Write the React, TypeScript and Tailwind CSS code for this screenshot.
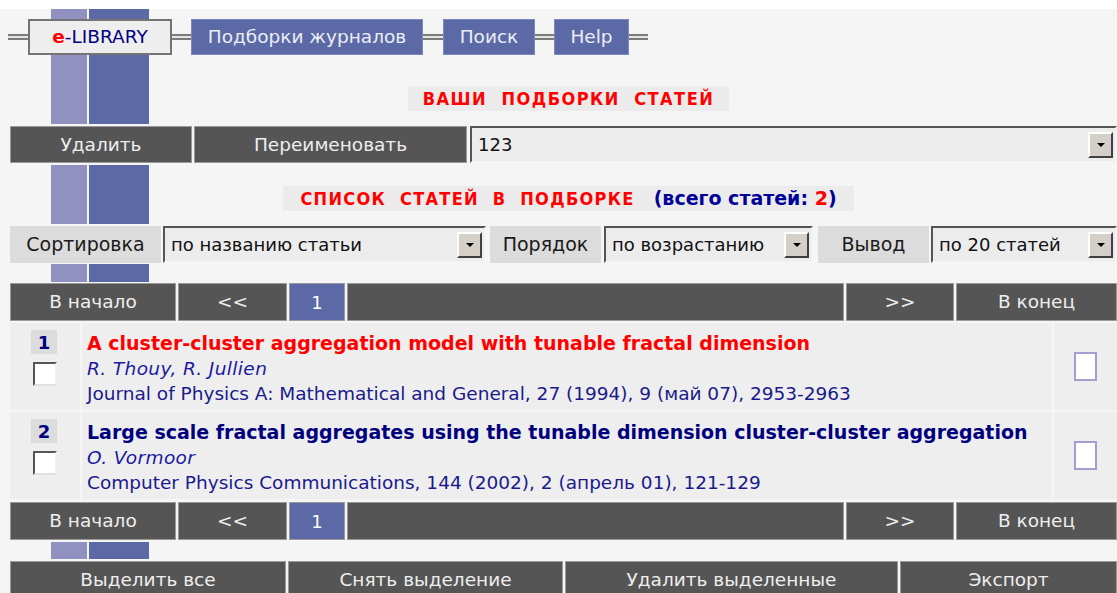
import type { ReactNode } from "react";

// two vertical stripes that run down the left side between table blocks
const stripes =
  "bg-[linear-gradient(to_right,transparent_51px,#9191c1_51px,#9191c1_87px,transparent_87px,transparent_89px,#5b6aa5_89px,#5b6aa5_149px,transparent_149px)]";

const font = "font-['DejaVu_Sans',sans-serif]";
const narrow = "font-['DejaVu_Sans_Condensed','DejaVu_Sans',sans-serif]";

type Article = {
  n: number;
  title: string;
  authors: string;
  source: string;
  hot?: boolean;
};

const articles: Article[] = [
  {
    n: 1,
    title: "A cluster-cluster aggregation model with tunable fractal dimension",
    authors: "R. Thouy, R. Jullien",
    source: "Journal of Physics A: Mathematical and General, 27 (1994), 9 (май 07), 2953-2963",
    hot: true,
  },
  {
    n: 2,
    title: "Large scale fractal aggregates using the tunable dimension cluster-cluster aggregation",
    authors: "O. Vormoor",
    source: "Computer Physics Communications, 144 (2002), 2 (апрель 01), 121-129",
  },
];

function Link() {
  return <div className="h-[6px] border-y-2 border-[#7a7a7a] bg-[#e4e4e4]" />;
}

function NavItem({ children, className = "" }: { children: ReactNode; className?: string }) {
  return (
    <div
      className={`flex h-full items-center justify-center border border-[#7d88bb] bg-[#5b6aa6] text-[18.5px] text-[#eceef6] ${className}`}
    >
      {children}
    </div>
  );
}

function Cell({ children, className = "" }: { children?: ReactNode; className?: string }) {
  return (
    <div
      className={`flex h-full items-center justify-center border border-[#9a9a9a] bg-[#555555] text-[18.5px] text-[#eeeeee] ${className}`}
    >
      {children}
    </div>
  );
}

function Label({ children, className = "" }: { children: ReactNode; className?: string }) {
  return (
    <div className={`flex h-full items-center justify-center bg-[#dcdcdc] text-[19px] text-[#1a1a1a] ${className}`}>
      {children}
    </div>
  );
}

function Select({ value, className = "" }: { value: string; className?: string }) {
  return (
    <div
      className={`flex h-full items-center border-2 border-t-[#555] border-l-[#555] border-r-[#f4f4f4] border-b-[#f4f4f4] bg-[#ececec] pl-[6px] pr-[2px] text-[18px] text-[#111] ${className}`}
    >
      <span className="flex-1 truncate">{value}</span>
      <span className="flex h-[26px] w-[25px] items-center justify-center border-2 border-t-white border-l-white border-r-[#404040] border-b-[#404040] bg-[#d4d0c8]">
        <span className="border-x-[4px] border-t-[4px] border-x-transparent border-t-black" />
      </span>
    </div>
  );
}

function Pager() {
  return (
    <div className="ml-[10px] flex h-[38px] gap-[2px]">
      <Cell className="w-[166px]">В начало</Cell>
      <Cell className="w-[109px] text-[#9a9a9a]">&lt;&lt;</Cell>
      <div className="flex h-full w-[56px] items-center justify-center border border-[#9a9a9a] bg-[#5b6aa6] text-[18px] text-white">
        1
      </div>
      <Cell className="flex-1" />
      <Cell className="w-[108px] text-[#9a9a9a]">&gt;&gt;</Cell>
      <Cell className="w-[161px]">В конец</Cell>
    </div>
  );
}

function ArticleRow({ a }: { a: Article }) {
  return (
    <div className="ml-[10px] flex h-[87px] gap-[2px]">
      <div className="flex w-[70px] flex-col items-start bg-[#eeeeee] pl-[21px] pt-[7px]">
        <div className="flex h-[24px] w-[26px] items-center justify-center bg-[#dcdcdc] text-[18px] font-bold text-[#00007f]">
          {a.n}
        </div>
        <div className="ml-[2px] mt-[8px] h-[24px] w-[24px] border-2 border-t-[#555] border-l-[#555] border-r-[#f0f0f0] border-b-[#e0e0e0] bg-white" />
      </div>
      <div className="flex flex-1 flex-col bg-[#eeeeee] pl-[5px] pt-[8px] leading-[25px]">
        <div className={`text-[19px] font-bold ${a.hot ? "text-[#ff0000]" : "text-[#00007f]"}`}>{a.title}</div>
        <div className="text-[18.5px] italic tracking-[0.4px] text-[#1a1aa0]">{a.authors}</div>
        <div className="text-[18.5px] text-[#1a1a8c]">{a.source}</div>
      </div>
      <div className="flex w-[63px] items-center justify-center bg-[#eeeeee]">
        <div className="h-[29px] w-[23px] border-2 border-[#a49ed0] bg-white" />
      </div>
    </div>
  );
}

export default function App() {
  return (
    <div className={`min-h-screen bg-[#f5f5f5] ${font}`}>
      <div className="h-[9px] bg-white" />

      <div className={`${stripes} h-[115px] pt-[10px]`}>
        <div className="flex h-[36px] items-center">
          <div className="ml-[8px] w-[20px]">
            <Link />
          </div>
          <div className="flex h-full w-[144px] items-center justify-center border-2 border-[#747474] bg-[#eeeeee] text-[18.5px] text-[#000080]">
            <span className="font-bold text-[#ff0000]">e</span>-LIBRARY
          </div>
          <div className="w-[19px]">
            <Link />
          </div>
          <NavItem className="w-[232px]">Подборки журналов</NavItem>
          <div className="w-[20px]">
            <Link />
          </div>
          <NavItem className="w-[92px]">Поиск</NavItem>
          <div className="w-[19px]">
            <Link />
          </div>
          <NavItem className="w-[75px]">Help</NavItem>
          <div className="w-[19px]">
            <Link />
          </div>
        </div>
        <div className="mt-[31px] flex justify-center pl-[20px]">
          <div
            className={`flex h-[25px] items-center bg-[#ebebeb] px-[15px] text-[18px] font-bold tracking-[1.5px] text-[#ff0000] ${narrow}`}
          >
            ВАШИ&nbsp; ПОДБОРКИ&nbsp; СТАТЕЙ
          </div>
        </div>
      </div>

      <div className="ml-[10px] mt-[2px] flex h-[37px] gap-[2px]">
        <Cell className="w-[182px]">Удалить</Cell>
        <Cell className="w-[273px]">Переименовать</Cell>
        <Select value="123" className="ml-[1px] flex-1" />
      </div>

      <div className={`${stripes} mt-[2px] flex h-[59px] justify-center pl-[20px] pt-[21px]`}>
        <div className="flex h-[25px] items-center bg-[#ebebeb] px-[17px] font-bold">
          <span className={`text-[18px] tracking-[1.3px] text-[#ff0000] ${narrow}`}>
            СПИСОК&nbsp; СТАТЕЙ&nbsp; В&nbsp; ПОДБОРКЕ
          </span>
          <span className="ml-[19px] text-[19px] text-[#000099]">
            (всего статей: <span className="text-[#ff0000]">2</span>)
          </span>
        </div>
      </div>

      <div className="ml-[10px] mt-[2px] flex h-[37px]">
        <Label className="w-[151px]">Сортировка</Label>
        <Select value="по названию статьи" className="ml-[2px] w-[323px]" />
        <Label className="ml-[4px] w-[111px]">Порядок</Label>
        <Select value="по возрастанию" className="ml-[3px] w-[209px]" />
        <Label className="ml-[5px] w-[111px]">Вывод</Label>
        <Select value="по 20 статей" className="ml-[2px] flex-1" />
      </div>

      <div className={`${stripes} mt-[1px] h-[18px]`} />

      <div className="mt-[1px]">
        <Pager />
      </div>

      <div className="mt-[2px] flex flex-col gap-[2px]">
        {articles.map((a) => (
          <ArticleRow key={a.n} a={a} />
        ))}
      </div>

      <div className="mt-[3px]">
        <Pager />
      </div>

      <div className={`${stripes} mt-[2px] h-[17px]`} />

      <div className="ml-[10px] mt-[2px] flex h-[38px] gap-[2px]">
        <Cell className="w-[276px]">Выделить все</Cell>
        <Cell className="w-[275px]">Снять выделение</Cell>
        <Cell className="w-[333px]">Удалить выделенные</Cell>
        <Cell className="flex-1">Экспорт</Cell>
      </div>
    </div>
  );
}
